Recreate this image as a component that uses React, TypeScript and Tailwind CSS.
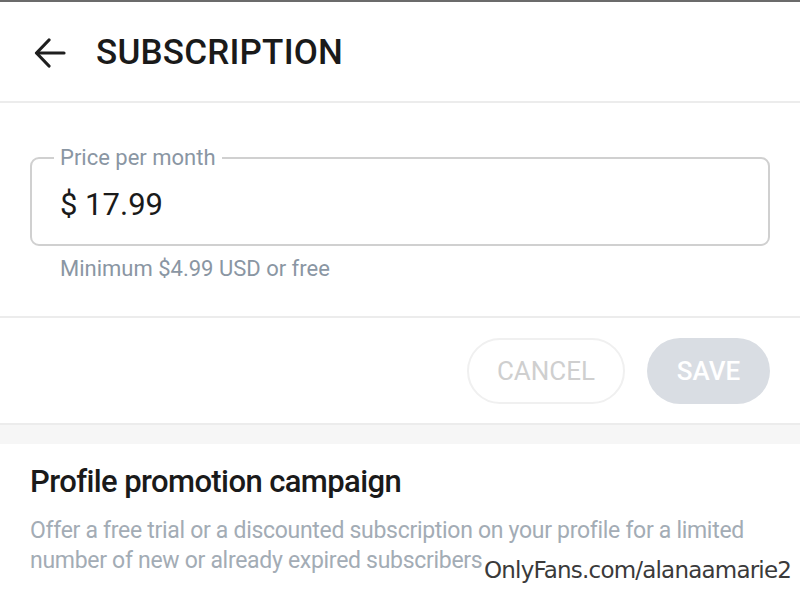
export default function App() {
  return (
    <div className="min-h-[591px] w-[800px] overflow-hidden bg-white font-['Roboto',sans-serif] text-[#1a1a1a] relative">
      <div className="h-[2px] bg-[#6b6b6b]" />
      <header className="flex h-[101px] items-center border-b-2 border-[#ececec] pl-[34px]">
        <svg width="32" height="30" viewBox="0 0 32 30" fill="none" stroke="#1f1f1f" strokeWidth="3.2" strokeLinecap="round" strokeLinejoin="round" className="mt-[2px]">
          <path d="M30 15H3" />
          <path d="M15 2 2.5 15 15 28" />
        </svg>
        <h1 className="ml-[30px] text-[35px] font-medium tracking-[0.2px] leading-none mt-[1px]">SUBSCRIPTION</h1>
      </header>

      <section className="px-[30px] pt-[43px] pb-[34px]">
        <fieldset className="h-[100px] rounded-[9px] border-2 border-[#d0d0d0] pl-[22px] pr-[28px]">
          <legend className="px-[6px] text-[22px] leading-[24px] text-[#8a96a3]">Price per month</legend>
          <div className="pl-[6px] pt-[19px] text-[31px] leading-none text-[#1a1a1a]">$ 17.99</div>
        </fieldset>
        <p className="mt-[10px] pl-[30px] text-[22px] leading-[26px] text-[#8a96a3]">Minimum $4.99 USD or free</p>
      </section>

      <div className="flex justify-end gap-[22px] border-y-2 border-[#ececec] px-[30px] pt-[20px] pb-[19px]">
        <button className="h-[66px] w-[158px] rounded-full border-2 border-[#f0f0f0] text-[26px] text-[#cfcfcf]">CANCEL</button>
        <button className="h-[66px] w-[123px] rounded-full bg-[#d9dde3] text-[26px] font-medium text-white">SAVE</button>
      </div>
      <div className="h-[19px] bg-[#f6f6f6]" />

      <section className="px-[30px] pt-[19px]">
        <h2 className="text-[31px] font-medium leading-[38px] tracking-[-0.6px] text-[#1a1a1a]">Profile promotion campaign</h2>
        <p className="mt-[15px] max-w-[735px] text-[23px] leading-[30px] tracking-[-0.3px] text-[#a3acb5]">
          Offer a free trial or a discounted subscription on your profile for a limited number of new or already expired subscribers
        </p>
      </section>

      <div className="absolute left-[484px] top-[555px] font-['DejaVu_Sans',sans-serif] text-[23px] leading-[30px] tracking-[-0.8px] text-[#3a3a3a]">
        OnlyFans.com/alanaamarie2
      </div>
    </div>
  );
}
